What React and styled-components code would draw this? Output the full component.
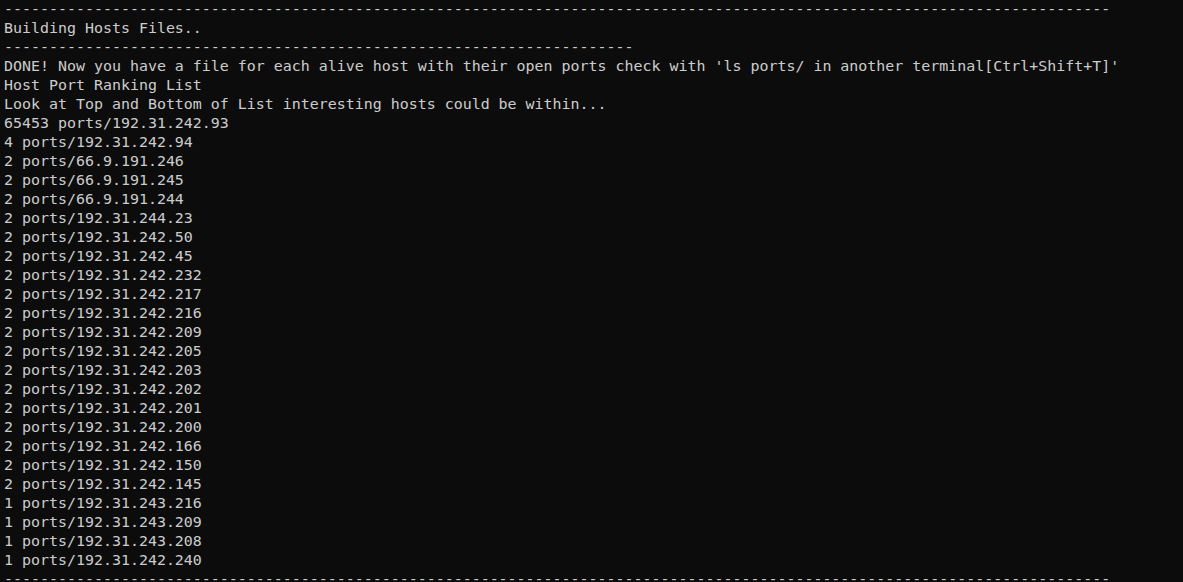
import React from 'react';
import styled, { createGlobalStyle } from 'styled-components';

const GlobalStyle = createGlobalStyle`
  html, body {
    margin: 0;
    padding: 0;
    background: #0c0c0c;
    overflow: hidden;
  }
`;

const hosts = [
  ['65453', '192.31.242.93'],
  ['4', '192.31.242.94'],
  ['2', '66.9.191.246'],
  ['2', '66.9.191.245'],
  ['2', '66.9.191.244'],
  ['2', '192.31.244.23'],
  ['2', '192.31.242.50'],
  ['2', '192.31.242.45'],
  ['2', '192.31.242.232'],
  ['2', '192.31.242.217'],
  ['2', '192.31.242.216'],
  ['2', '192.31.242.209'],
  ['2', '192.31.242.205'],
  ['2', '192.31.242.203'],
  ['2', '192.31.242.202'],
  ['2', '192.31.242.201'],
  ['2', '192.31.242.200'],
  ['2', '192.31.242.166'],
  ['2', '192.31.242.150'],
  ['2', '192.31.242.145'],
  ['1', '192.31.243.216'],
  ['1', '192.31.243.209'],
  ['1', '192.31.243.208'],
  ['1', '192.31.242.240'],
];

function App() {
  return (
    <>
      <GlobalStyle />
      <Terminal>
        <Rule count={123} />
        <Line>Building Hosts Files..</Line>
        <Rule count={70} />
        <Line>
          DONE! Now you have a file for each alive host with their open ports check with 'ls ports/ in another terminal[Ctrl+Shift+T]'
        </Line>
        <Line>Host Port Ranking List</Line>
        <Line>Look at Top and Bottom of List interesting hosts could be within...</Line>
        {hosts.map(([n, ip]) => (
          <Line key={ip}>{`${n} ports/${ip}`}</Line>
        ))}
        <Rule count={123} />
      </Terminal>
    </>
  );
}

const Rule = ({ count }) => <Line>{'-'.repeat(count)}</Line>;

const Terminal = styled.div`
  width: 1183px;
  height: 582px;
  box-sizing: border-box;
  padding: 0 0 0 4px;
  background: #0c0c0c;
  color: #cccccc;
  font-family: 'DejaVu Sans Mono', 'Liberation Mono', monospace;
  font-size: 14.95px;
  overflow: hidden;
`;

const Line = styled.div`
  height: 19px;
  line-height: 19px;
  white-space: pre;
`;

export default App;
